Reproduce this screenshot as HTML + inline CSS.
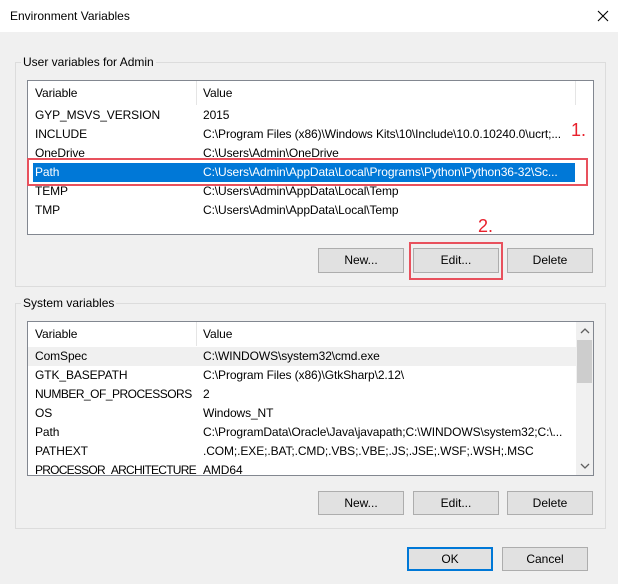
<!DOCTYPE html>
<html><head><meta charset="utf-8"><style>
*{box-sizing:border-box;margin:0;padding:0}
body{width:618px;height:584px;background:#f0f0f0;font-family:"Liberation Sans",sans-serif;font-size:12px;color:#000;position:relative;overflow:hidden}
.a{position:absolute}
.title{left:0;top:0;width:618px;height:32px;background:#fff}
.grp{border:1px solid #dcdcdc}
.lbl{background:#f0f0f0;padding:0 2px;white-space:nowrap}
.list{background:#fff;border:1px solid #828790;overflow:hidden;letter-spacing:-0.1px}
.row{position:absolute;left:0;height:19px;line-height:19px;width:548px;white-space:nowrap}
.row span{position:absolute}
.row .v{left:7px}.row .w{left:175px}
.btn{background:#e1e1e1;border:1px solid #adadad;text-align:center;line-height:23px}
.red{border:2px solid #e8515d}
.rt{color:#e8202c;font-size:18px}
</style></head><body>
<div class="a title"></div>
<div class="a" style="left:10px;top:9px;font-size:12px">Environment Variables</div>
<svg class="a" style="left:597px;top:10px" width="12" height="12"><path d="M1 1L11 11M11 1L1 11" stroke="#000" stroke-width="1.1"/></svg>

<div class="a grp" style="left:15px;top:62px;width:591px;height:225px"></div>
<div class="a lbl" style="left:21px;top:55px">User variables for Admin</div>
<div class="a list" style="left:27px;top:80px;width:567px;height:155px">
 <div class="a" style="left:168px;top:0;width:1px;height:24px;background:#e5e5e5"></div>
 <div class="a" style="left:547px;top:0;width:1px;height:24px;background:#e5e5e5"></div>
 <div class="row" style="top:3px"><span class="v">Variable</span><span class="w">Value</span></div>
 <div class="row" style="top:25px"><span class="v">GYP_MSVS_VERSION</span><span class="w">2015</span></div>
 <div class="row" style="top:44px"><span class="v">INCLUDE</span><span class="w">C:\Program Files (x86)\Windows Kits\10\Include\10.0.10240.0\ucrt;...</span></div>
 <div class="row" style="top:63px"><span class="v">OneDrive</span><span class="w">C:\Users\Admin\OneDrive</span></div>
 <div class="row" style="top:82px;left:5px;width:542px;background:#0078d7;color:#fff"><span class="v" style="left:2px">Path</span><span class="w" style="left:170px">C:\Users\Admin\AppData\Local\Programs\Python\Python36-32\Sc...</span></div>
 <div class="row" style="top:101px"><span class="v">TEMP</span><span class="w">C:\Users\Admin\AppData\Local\Temp</span></div>
 <div class="row" style="top:120px"><span class="v">TMP</span><span class="w">C:\Users\Admin\AppData\Local\Temp</span></div>
</div>
<div class="a red" style="left:27px;top:158px;width:561px;height:28px"></div>
<div class="a rt" style="left:571px;top:120px">1.</div>
<div class="a rt" style="left:478px;top:216px">2.</div>
<div class="a btn" style="left:318px;top:248px;width:86px;height:25px">New...</div>
<div class="a btn" style="left:413px;top:248px;width:86px;height:25px">Edit...</div>
<div class="a btn" style="left:507px;top:248px;width:86px;height:25px">Delete</div>
<div class="a red" style="left:409px;top:242px;width:94px;height:38px"></div>

<div class="a grp" style="left:15px;top:303px;width:591px;height:226px"></div>
<div class="a lbl" style="left:21px;top:296px">System variables</div>
<div class="a list" style="left:27px;top:321px;width:567px;height:155px">
 <div class="a" style="left:168px;top:0;width:1px;height:24px;background:#e5e5e5"></div>
 <div class="row" style="top:3px"><span class="v">Variable</span><span class="w">Value</span></div>
 <div class="row" style="top:25px;background:#f0f0f0"><span class="v">ComSpec</span><span class="w">C:\WINDOWS\system32\cmd.exe</span></div>
 <div class="row" style="top:44px"><span class="v">GTK_BASEPATH</span><span class="w">C:\Program Files (x86)\GtkSharp\2.12\</span></div>
 <div class="row" style="top:63px"><span class="v" style="letter-spacing:-0.5px">NUMBER_OF_PROCESSORS</span><span class="w">2</span></div>
 <div class="row" style="top:82px"><span class="v">OS</span><span class="w">Windows_NT</span></div>
 <div class="row" style="top:101px"><span class="v">Path</span><span class="w">C:\ProgramData\Oracle\Java\javapath;C:\WINDOWS\system32;C:\...</span></div>
 <div class="row" style="top:120px"><span class="v">PATHEXT</span><span class="w">.COM;.EXE;.BAT;.CMD;.VBS;.VBE;.JS;.JSE;.WSF;.WSH;.MSC</span></div>
 <div class="row" style="top:139px"><span class="v" style="letter-spacing:-0.75px">PROCESSOR_ARCHITECTURE</span><span class="w">AMD64</span></div>
 <div class="a" style="left:548px;top:0;width:17px;height:153px;background:#f0f0f0"></div>
 <div class="a" style="left:549px;top:18px;width:15px;height:43px;background:#cdcdcd"></div>
 <svg class="a" style="left:552px;top:5px" width="10" height="8"><path d="M1 6L5 2L9 6" stroke="#606060" fill="none" stroke-width="1.3"/></svg>
 <svg class="a" style="left:552px;top:140px" width="10" height="8"><path d="M1 2L5 6L9 2" stroke="#606060" fill="none" stroke-width="1.3"/></svg>
</div>
<div class="a btn" style="left:318px;top:491px;width:86px;height:24px">New...</div>
<div class="a btn" style="left:413px;top:491px;width:86px;height:24px">Edit...</div>
<div class="a btn" style="left:507px;top:491px;width:86px;height:24px">Delete</div>

<div class="a btn" style="left:407px;top:547px;width:86px;height:24px;border:2px solid #0078d7;line-height:20px">OK</div>
<div class="a btn" style="left:502px;top:547px;width:86px;height:24px">Cancel</div>
</body></html>
